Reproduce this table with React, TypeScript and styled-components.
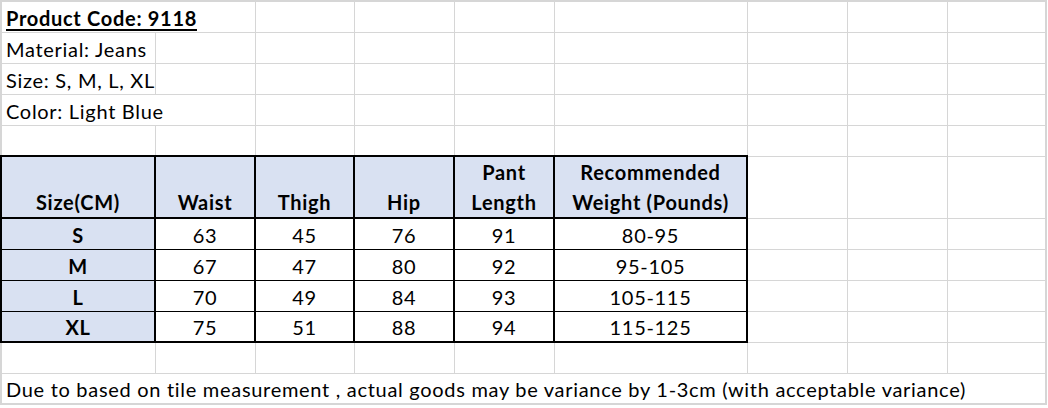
import React from "react";
import styled, { createGlobalStyle } from "styled-components";

// Sheet colours
const GRID = "#d6d6d6";
const INK = "#000";
const HEAD_BG = "#d9e1f2";

const GlobalStyle = createGlobalStyle`
  html, body {
    margin: 0;
    padding: 0;
    background: #fff;
  }
  body {
    font-family: Lato, "Liberation Sans", sans-serif;
    color: ${INK};
  }
`;

const Sheet = styled.table`
  border-collapse: collapse;
  table-layout: fixed;
  width: 1047px;
  border: 2px solid ${GRID};
  font-family: Lato, "Liberation Sans", sans-serif;
  font-size: 20px;
  letter-spacing: 0.7px;
  color: ${INK};
`;

const Col = styled.col<{ $w: number }>`
  width: ${(p) => p.$w}px;
`;

const Row = styled.tr<{ $tall?: boolean }>`
  height: ${(p) => (p.$tall ? 62 : 31)}px;
`;

const Cell = styled.td`
  padding: 0 4px 2px;
  border: 1px solid ${GRID};
  vertical-align: bottom;
  line-height: 24px;
  white-space: nowrap;
  overflow: visible;
`;

const Title = styled.span`
  font-weight: 700;
  text-decoration: underline;
  text-decoration-thickness: 2px;
  text-underline-offset: 3px;
`;

const HeadCell = styled(Cell)`
  padding: 0 2px;
  line-height: 30px;
  background: ${HEAD_BG};
  border: 2px solid ${INK};
  font-weight: 700;
  text-align: center;
`;

const ChartCell = styled(Cell)<{ $label?: boolean; $last?: boolean }>`
  text-align: center;
  border-left: 2px solid ${INK};
  border-right: 2px solid ${INK};
  border-top: 1px solid ${INK};
  border-bottom: ${(p) => (p.$last ? "2px" : "1px")} solid ${INK};
  background: ${(p) => (p.$label ? HEAD_BG : "transparent")};
  font-weight: ${(p) => (p.$label ? 700 : 400)};
`;

const widths = [154, 100, 99, 100, 100, 193, 100, 100, 99];

const headers: React.ReactNode[] = [
  "Size(CM)",
  "Waist",
  "Thigh",
  "Hip",
  <>
    Pant
    <br />
    Length
  </>,
  <>
    Recommended
    <br />
    Weight (Pounds)
  </>,
];

const sizes = [
  ["S", "63", "45", "76", "91", "80-95"],
  ["M", "67", "47", "80", "92", "95-105"],
  ["L", "70", "49", "84", "93", "105-115"],
  ["XL", "75", "51", "88", "94", "115-125"],
];

const Blanks: React.FC<{ n: number }> = ({ n }) => (
  <>
    {Array.from({ length: n }, (_, i) => (
      <Cell key={i} />
    ))}
  </>
);

const App: React.FC = () => {
  return (
    <>
      <GlobalStyle />
      <Sheet>
        <colgroup>
          {widths.map((w, i) => (
            <Col key={i} $w={w} />
          ))}
        </colgroup>
        <tbody>
          <Row>
            <Cell colSpan={2}>
              <Title>Product Code: 9118</Title>
            </Cell>
            <Blanks n={7} />
          </Row>
          <Row>
            <Cell>Material: Jeans</Cell>
            <Blanks n={8} />
          </Row>
          <Row>
            <Cell>Size: S, M, L, XL</Cell>
            <Blanks n={8} />
          </Row>
          <Row>
            <Cell colSpan={2}>Color: Light Blue</Cell>
            <Blanks n={7} />
          </Row>
          <Row>
            <Blanks n={9} />
          </Row>
          <Row $tall>
            {headers.map((h, i) => (
              <HeadCell key={i}>{h}</HeadCell>
            ))}
            <Blanks n={3} />
          </Row>
          {sizes.map((row, r) => (
            <Row key={row[0]}>
              {row.map((v, i) => (
                <ChartCell key={i} $label={i === 0} $last={r === sizes.length - 1}>
                  {v}
                </ChartCell>
              ))}
              <Blanks n={3} />
            </Row>
          ))}
          <Row>
            <Blanks n={9} />
          </Row>
          <Row>
            <Cell colSpan={9}>
              Due to based on tile measurement , actual goods may be variance by 1-3cm (with
              acceptable variance)
            </Cell>
          </Row>
        </tbody>
      </Sheet>
    </>
  );
};

export default App;
